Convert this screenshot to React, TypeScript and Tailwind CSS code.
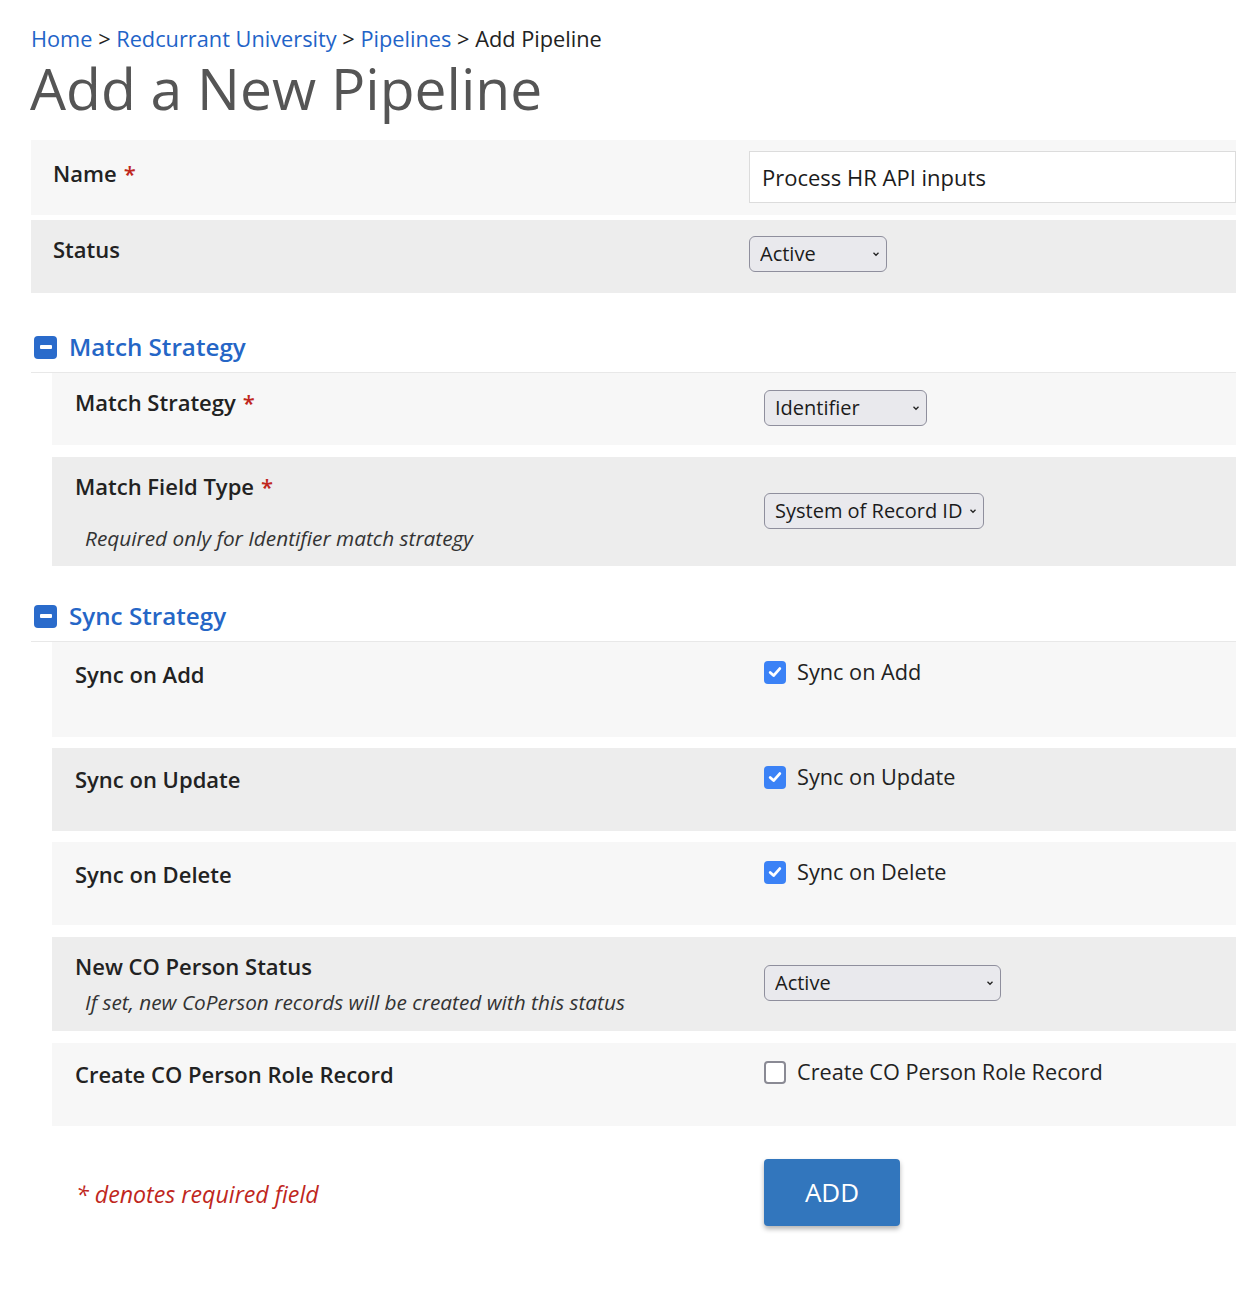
import { useState } from 'react'

const font = { fontFamily: '"Open Sans", "Noto Sans", sans-serif' }

function Chevron() {
  return (
    <svg width="8" height="6" viewBox="0 0 8 6" className="pointer-events-none absolute right-[7px] top-1/2 -translate-y-1/2">
      <path d="M1.5 1.8 L4 4.3 L6.5 1.8" fill="none" stroke="#222" strokeWidth="1.3" />
    </svg>
  )
}

function Select({ value, width }: { value: string; width: string }) {
  return (
    <div className={`relative ${width}`}>
      <select
        defaultValue={value}
        className="h-[36px] w-full appearance-none rounded-[6px] border border-[#8f8f9d] bg-[#e9e9ed] pl-[10px] pr-[18px] text-[20px] text-[#1b1b1b] outline-none"
      >
        <option>{value}</option>
      </select>
      <Chevron />
    </div>
  )
}

function Checkbox({ checked, label }: { checked: boolean; label: string }) {
  const [on, setOn] = useState(checked)
  return (
    <label className="flex cursor-pointer items-center gap-[11px] text-[21.7px] leading-[28px] text-[#222]" onClick={() => setOn(!on)}>
      {on ? (
        <span className="flex h-[23px] w-[22px] items-center justify-center rounded-[4px] bg-[#3b82f6]">
          <svg width="16" height="16" viewBox="0 0 16 16">
            <path d="M3.2 8.4 L6.6 11.6 L12.8 4.6" fill="none" stroke="white" strokeWidth="2.8" strokeLinecap="round" strokeLinejoin="round" />
          </svg>
        </span>
      ) : (
        <span className="h-[23px] w-[22px] rounded-[4px] border-2 border-[#8a8a94] bg-white" />
      )}
      {label}
    </label>
  )
}

function Req() {
  return <span className="ml-[7px] text-[#c0271d]">*</span>
}

function Row({
  label,
  required,
  note,
  noteGap = 'mt-[8px]',
  labelTop = 'pt-[15px]',
  shade,
  height,
  extra = '',
  children,
}: {
  label: string
  required?: boolean
  note?: string
  noteGap?: string
  labelTop?: string
  shade: 'light' | 'dark'
  height: string
  extra?: string
  children: React.ReactNode
}) {
  return (
    <div className={`flex ${height} ${extra} ${shade === 'light' ? 'bg-[#f7f7f7]' : 'bg-[#ededed]'}`}>
      <div className={`w-[712px] shrink-0 pl-[23px] ${labelTop}`}>
        <div className="text-[22px] font-semibold leading-[28px] text-[#222]">
          {label}
          {required && <Req />}
        </div>
        {note && <div className={`${noteGap} pl-[10px] text-[20.8px] leading-[28px] italic text-[#333]`}>{note}</div>}
      </div>
      <div className="flex-1">{children}</div>
    </div>
  )
}

function SectionHeader({ title }: { title: string }) {
  return (
    <div className="flex h-[55px] items-center gap-[12px] border-b border-[#e8e8e8] pl-[3px] pt-[4px]">
      <span className="flex h-[23px] w-[23px] items-center justify-center rounded-[4px] bg-[#2a6bcb]">
        <span className="h-[4px] w-[12px] rounded-[1px] bg-white" />
      </span>
      <span className="text-[24.2px] font-semibold text-[#2566c6]">{title}</span>
    </div>
  )
}

export default function App() {
  return (
    <div className="min-h-[1300px] bg-white pl-[31px] pt-[24px]" style={font}>
      <div className="text-[21.75px] leading-[30px] text-[#222]">
        <a className="text-[#1f64c8]">Home</a> &gt; <a className="text-[#1f64c8]">Redcurrant University</a> &gt;{' '}
        <a className="text-[#1f64c8]">Pipelines</a> &gt; Add Pipeline
      </div>
      <h1 className="-ml-[1px] mt-[2px] text-[57px] leading-[64px] text-[#555]">Add a New Pipeline</h1>

      <div className="mt-[20px] flex flex-col gap-[5px]">
        <div className="flex h-[75px] bg-[#f7f7f7]">
          <div className="w-[718px] shrink-0 pl-[22px] pt-[19px] text-[22px] font-semibold leading-[28px] text-[#222]">
            Name
            <Req />
          </div>
          <div className="flex-1 pt-[11px]">
            <input
              defaultValue="Process HR API inputs"
              className="h-[52px] w-full border border-[#dcdcdc] bg-white px-[12px] text-[22px] text-[#1b1b1b] outline-none"
            />
          </div>
        </div>
        <div className="flex h-[73px] bg-[#ededed]">
          <div className="w-[718px] shrink-0 pl-[22px] pt-[15px] text-[22px] font-semibold leading-[28px] text-[#222]">
            Status
          </div>
          <div className="pt-[16px]">
            <Select value="Active" width="w-[138px]" />
          </div>
        </div>
      </div>

      <div className="mt-[25px]">
        <SectionHeader title="Match Strategy" />
        <div className="ml-[21px] flex flex-col gap-[12px]">
          <Row label="Match Strategy" required shade="light" height="h-[72px]">
            <div className="pt-[17px]">
              <Select value="Identifier" width="w-[163px]" />
            </div>
          </Row>
          <Row
            label="Match Field Type"
            required
            note="Required only for Identifier match strategy"
            noteGap="mt-[24px]"
            shade="dark"
            height="h-[109px]"
          >
            <div className="pt-[36px]">
              <Select value="System of Record ID" width="w-[220px]" />
            </div>
          </Row>
        </div>
      </div>

      <div className="mt-[21px]">
        <SectionHeader title="Sync Strategy" />
        <div className="ml-[21px] flex flex-col gap-[11px]">
          <Row label="Sync on Add" labelTop="pt-[18px]" shade="light" height="h-[95px]">
            <div className="pt-[16px]">
              <Checkbox checked label="Sync on Add" />
            </div>
          </Row>
          <Row label="Sync on Update" labelTop="pt-[17px]" shade="dark" height="h-[83px]">
            <div className="pt-[15px]">
              <Checkbox checked label="Sync on Update" />
            </div>
          </Row>
          <Row label="Sync on Delete" labelTop="pt-[18px]" shade="light" height="h-[83px]">
            <div className="pt-[16px]">
              <Checkbox checked label="Sync on Delete" />
            </div>
          </Row>
          <Row
            label="New CO Person Status"
            note="If set, new CoPerson records will be created with this status"
            noteGap="mt-[8px]"
            shade="dark"
            height="h-[94px]"
            extra="mt-[1px]"
          >
            <div className="pt-[28px]">
              <Select value="Active" width="w-[237px]" />
            </div>
          </Row>
          <Row label="Create CO Person Role Record" labelTop="pt-[17px]" shade="light" height="h-[83px]" extra="mt-[1px]">
            <div className="pt-[15px]">
              <Checkbox checked={false} label="Create CO Person Role Record" />
            </div>
          </Row>
        </div>
      </div>

      <div className="ml-[21px] mt-[33px] flex">
        <div className="w-[712px] shrink-0 pl-[24px] pt-[19px] text-[23.2px] italic leading-[32px] text-[#c0271d]">
          * denotes required field
        </div>
        <button className="h-[67px] w-[136px] rounded-[4px] bg-[#3276bd] text-[26px] text-white shadow-[0_3px_5px_rgba(0,0,0,0.3)]">
          ADD
        </button>
      </div>
    </div>
  )
}
